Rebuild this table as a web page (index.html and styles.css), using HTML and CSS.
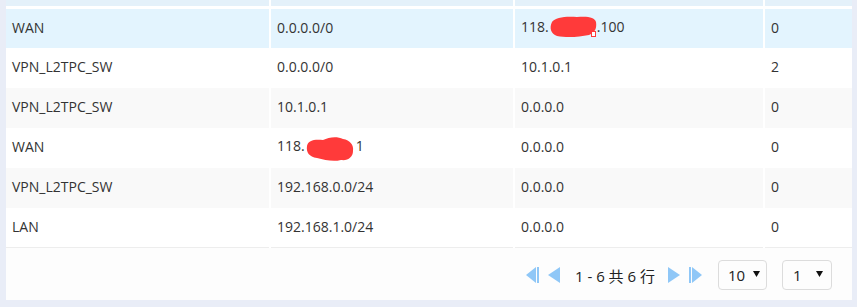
FILE: index.html
```html
<!DOCTYPE html>
<html lang="zh-CN">
<head>
<meta charset="utf-8">
<title>路由表</title>
<link rel="stylesheet" href="styles.css">
</head>
<body>
<div class="card">
  <table class="grid">
    <colgroup>
      <col class="c1"><col class="c2"><col class="c3"><col class="c4">
    </colgroup>
    <thead>
      <tr class="head"><th></th><th></th><th></th><th></th></tr>
    </thead>
    <tbody>
      <tr class="sel">
        <td>WAN</td><td>0.0.0.0/0</td>
        <td>118.<span class="blob b1"><svg width="48" height="22" viewBox="0 0 48 22"><path d="M3 6 C6 1 18 0 28 1 C38 0 46 1 47 6 C48 12 46 17 40 19 C30 21 18 22 8 20 C2 18 0 12 3 6 Z" fill="#ff3a3a"/><rect x="42.5" y="15.5" width="4" height="5" fill="#fff" stroke="#ff3a3a" stroke-width="1"/></svg></span>.100</td>
        <td>0</td>
      </tr>
      <tr><td>VPN_L2TPC_SW</td><td>0.0.0.0/0</td><td>10.1.0.1</td><td>2</td></tr>
      <tr class="alt"><td>VPN_L2TPC_SW</td><td>10.1.0.1</td><td>0.0.0.0</td><td>0</td></tr>
      <tr>
        <td>WAN</td>
        <td>118.<span class="blob b2"><svg width="50" height="26" viewBox="0 0 50 26"><path d="M2 10 C3 4 10 3 18 4 C24 1 32 0 38 3 C45 4 49 9 48 15 C48 21 43 25 36 24 C28 26 20 24 12 22 C4 21 1 16 2 10 Z" fill="#ff3a3a"/></svg></span>1</td>
        <td>0.0.0.0</td><td>0</td>
      </tr>
      <tr class="alt"><td>VPN_L2TPC_SW</td><td>192.168.0.0/24</td><td>0.0.0.0</td><td>0</td></tr>
      <tr class="last"><td>LAN</td><td>192.168.1.0/24</td><td>0.0.0.0</td><td>0</td></tr>
    </tbody>
  </table>
  <div class="footer">
    <div class="pager">
      <span class="pg first"><svg width="13" height="16" viewBox="0 0 13 16"><path d="M10 0 L10 16 L0 8 Z" fill="#8fc7f7"/><rect x="11" y="0" width="2" height="16" fill="#8fc7f7"/></svg></span>
      <span class="pg prev"><svg width="12" height="16" viewBox="0 0 12 16"><path d="M12 0 L12 16 L0 8 Z" fill="#8fc7f7"/></svg></span>
      <span class="info">1 - 6 共 6 行</span>
      <span class="pg next"><svg width="12" height="16" viewBox="0 0 12 16"><path d="M0 0 L0 16 L12 8 Z" fill="#8fc7f7"/></svg></span>
      <span class="pg last"><svg width="13" height="16" viewBox="0 0 13 16"><rect x="0" y="0" width="2" height="16" fill="#8fc7f7"/><path d="M3 0 L3 16 L13 8 Z" fill="#8fc7f7"/></svg></span>
    </div>
    <div class="select s1"><span>10</span><svg class="arrow" width="7" height="6" viewBox="0 0 7 6"><path d="M0 0 L7 0 L3.5 6 Z" fill="#111"/></svg></div>
    <div class="select s2"><span>1</span><svg class="arrow" width="7" height="6" viewBox="0 0 7 6"><path d="M0 0 L7 0 L3.5 6 Z" fill="#111"/></svg></div>
  </div>
</div>
</body>
</html>
```
FILE: styles.css
```css
html, body {
  margin: 0;
  padding: 0;
}
body {
  background: #e9edf7;
  width: 857px;
  height: 307px;
  overflow: hidden;
  font-family: "Open Sans", "Noto Sans CJK SC", sans-serif;
  font-size: 14px;
  color: #333;
}
.card {
  margin: 0 5px 0 6px;
  width: 846px;
  height: 300px;
  background: #fff;
  display: flex;
  flex-direction: column;
}
.grid {
  width: 846px;
  border-collapse: collapse;
  table-layout: fixed;
}
.c1 { width: 264px; }
.c2 { width: 244px; }
.c3 { width: 250px; }
.c4 { width: 88px; }
.head th {
  height: 6px;
  padding: 0;
  background: #e4f1fa;
  border-right: 2px solid #fff;
  border-bottom: 3px solid #fff;
}
.head th:last-child { border-right: none; }
td {
  height: 40px;
  padding: 0 0 2px 6px;
  box-sizing: border-box;
  white-space: nowrap;
  border-right: 2px solid #fff;
  vertical-align: middle;
}
td:last-child { border-right: none; }
tr.sel td { background: #e3f4fe; }
tr.alt td { background: #f9f9f9; }
tr.last td { border-bottom: 1px solid #ededed; }
.blob {
  display: inline-block;
  vertical-align: middle;
  line-height: 0;
}
.b1 { margin: -2px 0 0 0; width: 48px; }
.b2 { margin: 0 1px 0 0; width: 50px; position: relative; top: 2px; }
.footer {
  flex: 1;
  display: flex;
  align-items: center;
  justify-content: flex-end;
  padding: 0 20px 0 0;
  background: #fdfdfd;
}
.pager {
  display: flex;
  align-items: center;
  margin-right: 16px;
  margin-top: 2px;
}
.pg {
  display: inline-flex;
  line-height: 0;
}
.first { margin-right: 9px; }
.prev { margin-right: 15px; }
.info {
  font-size: 15px;
  color: #222;
  margin-right: 13px;
}
.next { margin-right: 9px; }
.select {
  height: 30px;
  box-sizing: border-box;
  border: 1px solid #dcdcdc;
  border-radius: 4px;
  display: flex;
  align-items: center;
  justify-content: space-between;
  color: #222;
  font-size: 15px;
  margin-top: 2px;
}
.s1 { width: 49px; padding: 0 6px 0 9px; margin-right: 15px; }
.s2 { width: 50px; padding: 0 8px 0 10px; }
.arrow { margin-top: -2px; }
```
